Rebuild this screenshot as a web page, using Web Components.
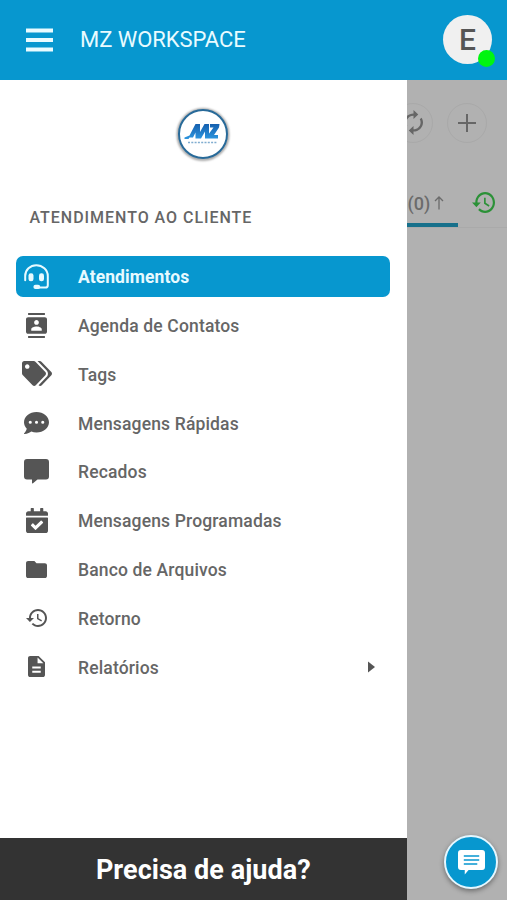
<!DOCTYPE html>
<html lang="pt-BR">
<head>
<meta charset="utf-8">
<title>MZ Workspace</title>
<style>
html,body{margin:0;height:100%;overflow:hidden}
body{font-family:Roboto,"Liberation Sans",sans-serif;background:#b1b1b1;color:#5c5c5c}
</style>
</head>
<body>
<mz-app></mz-app>
<script>
const ICONS = {
  headset: ['0 0 25 25', '<g fill="none" stroke="currentColor" stroke-width="2" stroke-linecap="round" stroke-linejoin="round"><path d="M1.2 16.2V12C1.2 5.8 6.2 1.2 12.3 1.2S23.8 5.8 23.8 12v9.2a2.4 2.4 0 0 1-2.4 2.4H12"/></g><rect x="4.5" y="9.2" width="5" height="8" rx="2.3"/><rect x="15" y="9.2" width="5" height="8" rx="2.3"/><rect x="9.4" y="20.8" width="6.8" height="4.2" rx="2.1"/>'],
  contacts: ['2 0 20 24', '<path d="M20 0H4v2h16V0zM4 24h16v-2H4v2zM20 4H4c-1.100 0-2 .9-2 2v12c0 1.100.9 2 2 2h16c1.100 0 2-.9 2-2V6c0-1.100-.9-2-2-2zm-8 2.750c1.240 0 2.250 1.010 2.250 2.250s-1.010 2.250-2.250 2.250S9.750 10.240 9.750 9 10.760 6.750 12 6.750zM17 17H7v-1.500c0-1.670 3.330-2.500 5-2.500s5 .83 5 2.500V17z"/>'],
  tags: ['0 0 640 512', '<path d="M497.941 225.941L286.059 14.059A48 48 0 0 0 252.118 0H48C21.490 0 0 21.490 0 48v204.118a48 48 0 0 0 14.059 33.941l211.882 211.882c18.744 18.745 49.136 18.746 67.882 0l204.118-204.118c18.745-18.745 18.745-49.137 0-67.882zM112 160c-26.510 0-48-21.490-48-48s21.490-48 48-48 48 21.490 48 48-21.490 48-48 48zm513.941 133.823L421.823 497.941c-18.745 18.745-49.137 18.745-67.882 0l-.36-.36L527.640 323.522c16.999-16.999 26.360-39.600 26.360-63.640s-9.362-46.641-26.360-63.640L331.397 0h48.721a48 48 0 0 1 33.941 14.059l211.882 211.882c18.745 18.745 18.745 49.137 0 67.882z"/>'],
  dots: ['0 32 512 448', '<path fill-rule="evenodd" d="M256 32C114.600 32 0 125.100 0 240c0 49.600 21.400 95 57 130.700C44.500 421.100 2.700 466 2.200 466.500c-2.200 2.300-2.800 5.700-1.500 8.700S4.800 480 8 480c66.300 0 116-31.800 140.600-51.400 32.700 12.300 69 19.400 107.400 19.400 141.400 0 256-93.100 256-208S397.400 32 256 32zM128 272a32 32 0 1 1 0-64 32 32 0 0 1 0 64zm128 0a32 32 0 1 1 0-64 32 32 0 0 1 0 64zm128 0a32 32 0 1 1 0-64 32 32 0 0 1 0 64z"/>'],
  note: ['0 0 25 25', '<path d="M3 0h19a3 3 0 0 1 3 3v14.500a3 3 0 0 1-3 3h-8.500L9 24.300q-1 .6-1-.6v-3.200H3a3 3 0 0 1-3-3V3a3 3 0 0 1 3-3z"/>'],
  calendar: ['0 0 448 512', '<path d="M436 160H12c-6.627 0-12-5.373-12-12v-36c0-26.510 21.490-48 48-48h48V12c0-6.627 5.373-12 12-12h40c6.627 0 12 5.373 12 12v52h128V12c0-6.627 5.373-12 12-12h40c6.627 0 12 5.373 12 12v52h48c26.510 0 48 21.490 48 48v36c0 6.627-5.373 12-12 12zM12 192h424c6.627 0 12 5.373 12 12v260c0 26.510-21.490 48-48 48H48c-26.510 0-48-21.490-48-48V204c0-6.627 5.373-12 12-12zm333.296 95.947l-28.169-28.398c-4.667-4.705-12.265-4.736-16.970-.068L194.120 364.665l-45.980-46.352c-4.667-4.705-12.266-4.736-16.971-.068l-28.397 28.170c-4.705 4.667-4.736 12.265-.068 16.970l82.601 83.269c4.667 4.705 12.265 4.736 16.970.068l142.953-141.805c4.705-4.667 4.736-12.265.068-16.970z"/>'],
  folder: ['2 4 20 16', '<path d="M10 4H4c-1.100 0-1.990.9-1.990 2L2 18c0 1.100.9 2 2 2h16c1.100 0 2-.9 2-2V8c0-1.100-.9-2-2-2h-8l-2-2z"/>'],
  history: ['1 3 21 18', '<path d="M13 3c-4.970 0-9 4.030-9 9H1l3.890 3.890.07.14L9 12H6c0-3.870 3.130-7 7-7s7 3.130 7 7-3.130 7-7 7c-1.930 0-3.680-.79-4.940-2.060l-1.420 1.420C8.270 19.990 10.510 21 13 21c4.970 0 9-4.030 9-9s-4.030-9-9-9zm-1 5v5l4.280 2.540.72-1.210-3.500-2.080V8H12z"/>'],
  report: ['4 2 16 20', '<path d="M14 2H6c-1.100 0-1.990.9-1.990 2L4 20c0 1.100.89 2 1.990 2H18c1.100 0 2-.9 2-2V8l-6-6zm2 16H8v-2h8v2zm0-4H8v-2h8v2zm-3-5V3.500L18.500 9H13z"/>'],
  menu: ['0 0 26 24', '<path d="M0 .5h26v4H0zM0 10h26v4H0zM0 19.500h26v4H0z"/>'],
  caret: ['0 0 7 12', '<path d="M0 .5v11L7 6z"/>'],
  sync: ['4 1 16 22', '<path d="M12 4V1L8 5l4 4V6c3.310 0 6 2.690 6 6 0 1.010-.25 1.970-.7 2.800l1.460 1.460C19.540 15.030 20 13.570 20 12c0-4.420-3.580-8-8-8zm0 14c-3.310 0-6-2.690-6-6 0-1.010.25-1.970.7-2.800L5.240 7.740C4.460 8.970 4 10.430 4 12c0 4.420 3.580 8 8 8v3l4-4-4-4v3z" transform="matrix(-1 0 0 1 24 0)"/>'],
  plus: ['0 0 18 18', '<path d="M8 0h2v8h8v2h-8v8H8v-8H0V8h8z"/>'],
  arrow: ['0 0 10 14', '<path d="M5 13.500V1M1 5l4-4 4 4" fill="none" stroke="currentColor" stroke-width="1.300"/>'],
  chat: ['0 0 28 25', '<path d="M3 0h22a3 3 0 0 1 3 3v14a3 3 0 0 1-3 3H11l-4 4.500V20H3a3 3 0 0 1-3-3V3a3 3 0 0 1 3-3z"/><path d="M6 6h16M6 10h16M6 14h14" stroke="#0797cf" stroke-width="1.600"/>'],
};
function define(name, html, setup){
  const t = document.createElement('template');
  t.innerHTML = html;
  customElements.define(name, class extends HTMLElement{
    connectedCallback(){
      if(this.shadowRoot) return;
      this.attachShadow({mode:'open'}).append(t.content.cloneNode(true));
      if(setup) setup(this, this.shadowRoot);
    }
  });
}
define('mz-icon', `<style>:host{display:block;flex:none}svg{display:block;fill:currentColor;overflow:visible}</style><svg preserveAspectRatio="none"></svg>`, (el, root) => {
  const [box, art] = ICONS[el.getAttribute('name')];
  const svg = root.querySelector('svg');
  svg.setAttribute('viewBox', box);
  svg.setAttribute('width', el.getAttribute('w'));
  svg.setAttribute('height', el.getAttribute('h'));
  svg.innerHTML = art;
});
define('mz-avatar', `<style>
:host{display:grid;place-items:center;position:relative;width:49px;height:49px;margin-top:-2px;border-radius:50%;background:#f0f0f0;color:#555;font:500 30px/49px Roboto,sans-serif}
i{position:absolute;right:-3px;bottom:-3px;width:17px;height:17px;border-radius:50%;background:#00f510}
</style><slot></slot><i></i>`);
define('mz-header', `<style>
:host{display:flex;align-items:center;height:80px;box-sizing:border-box;padding:0 15px 0 26px;background:#0797cf;color:#e9fbff}
h1{margin:0 auto 0 27px;font-weight:400;font-size:22px;line-height:30px;letter-spacing:-.05px}
</style><mz-icon name="menu" w="27" h="24"></mz-icon><h1><slot></slot></h1><mz-avatar>E</mz-avatar>`);
define('mz-logo', `<style>:host{display:block;height:54px}svg{display:block;margin:auto;overflow:visible}</style>
<svg width="54" height="54" viewBox="0 0 54 54">
<defs><filter id="s" x="-20%" y="-20%" width="140%" height="140%"><feGaussianBlur stdDeviation="1.300"/></filter>
<linearGradient id="g" x2="0" y2="1"><stop stop-color="#155fae"/><stop offset="1" stop-color="#2d96df"/></linearGradient></defs>
<circle cx="27" cy="27.500" r="25" fill="none" stroke="#999" stroke-width="2.500" filter="url(#s)"/>
<circle cx="27" cy="27" r="24" fill="#fff" stroke="#286a99" stroke-width="2"/>
<path fill="url(#g)" d="M8.500 30.500l5-2 6-11.500h4.500v8l4.500-8h4.500v14.500h-4v-7l-4 7h-5.500v-6l-2.500 5h-3.500l-1 1.500h-4zM34 17h9.500l-.5 3.500-5 7.500h4v3.500H31.500l.5-3.500 5.500-7.500H34z"/>
<path d="M12 35.500h29" stroke="#80add0" stroke-width="1.500" stroke-dasharray="2 1.300"/>
</svg>`);
define('mz-item', `<style>
:host{display:flex;align-items:center;height:40.8px;border-radius:7px;padding-right:15px;color:#555}
:host([active]){background:#0797cf;color:#e7faff}
.ico{width:42px;display:grid;place-items:center;flex:none;margin-right:20.500px}
.label{flex:1;font-weight:500;font-size:17.500px;line-height:24px;margin-top:1.500px;letter-spacing:.15px;color:#666;white-space:nowrap}
:host([active]) .label{color:#e7faff;font-weight:700;letter-spacing:.08px}
</style><span class="ico"></span><span class="label"><slot></slot></span><slot name="end"></slot>`, (el, root) => {
  const i = document.createElement('mz-icon');
  for (const a of ['w','h']) i.setAttribute(a, el.getAttribute(a));
  i.setAttribute('name', el.getAttribute('icon'));
  root.querySelector('.ico').append(i);
});
define('mz-drawer', `<style>
:host{display:flex;flex-direction:column;width:406.500px;flex:none;background:#fff}
mz-logo{margin-top:27px}
h2{margin:46px 0 27px 29.500px;font-weight:500;font-size:16px;line-height:22px;letter-spacing:.970px;color:#666;white-space:nowrap}
nav{display:grid;gap:8px;padding:0 16.500px 0 15.500px}
footer{margin-top:auto;height:62.500px;background:#333;color:#fff;font-weight:700;font-size:27px;letter-spacing:.04px;line-height:64px;text-align:center}
</style>
<mz-logo></mz-logo><h2>ATENDIMENTO AO CLIENTE</h2>
<nav>
<mz-item active icon="headset" w="25" h="25">Atendimentos</mz-item>
<mz-item icon="contacts" w="21" h="25">Agenda de Contatos</mz-item>
<mz-item icon="tags" w="30" h="25">Tags</mz-item>
<mz-item icon="dots" w="25" h="22">Mensagens Rápidas</mz-item>
<mz-item icon="note" w="25" h="25">Recados</mz-item>
<mz-item icon="calendar" w="22" h="25">Mensagens Programadas</mz-item>
<mz-item icon="folder" w="21" h="17">Banco de Arquivos</mz-item>
<mz-item icon="history" w="21" h="18">Retorno</mz-item>
<mz-item icon="report" w="17" h="21">Relatórios<mz-icon slot="end" name="caret" w="7" h="12"></mz-icon></mz-item>
</nav>
<footer>Precisa de ajuda?</footer>`);
define('mz-backdrop', `<style>
:host{display:flex;flex-direction:column;flex:1;min-width:0;overflow:hidden;background:#b1b1b1;color:#666}
.tools{display:flex;gap:14px;margin:22.500px 0 0 -13.500px}
.tools span{display:grid;place-items:center;width:38px;height:38px;border:1px solid #a9a9a9;border-radius:50%}
.tabs{display:flex;height:64px;margin-top:20.500px;border-bottom:1px solid #aaa}
.tab{display:flex;align-items:center;width:51.500px;box-sizing:border-box;border-bottom:4px solid #17708b;font-weight:500;font-size:18px;gap:4px;padding:20px 0 0 1px;color:#6b6b6b}
.hist{color:#2b9137;padding:29px 0 0 14px}
.chat{margin:auto 9px 11px auto;width:50px;height:50px;border:2px solid #e4f7ff;border-radius:50%;background:#0797cf;color:#fff;display:grid;place-items:center;box-shadow:0 2px 5px #0006}
</style>
<div class="tools"><span><mz-icon name="sync" w="19" h="25"></mz-icon></span><span><mz-icon name="plus" w="18" h="18"></mz-icon></span></div>
<div class="tabs"><div class="tab">(0)<mz-icon name="arrow" w="10" h="14"></mz-icon></div><div class="hist"><mz-icon name="history" w="23" h="21"></mz-icon></div></div>
<div class="chat"><mz-icon name="chat" w="27" h="25"></mz-icon></div>`);
define('mz-app', `<style>:host{display:flex;flex-direction:column;height:900px}main{display:flex;flex:1;min-height:0}</style>
<mz-header>MZ WORKSPACE</mz-header><main><mz-drawer></mz-drawer><mz-backdrop></mz-backdrop></main>`);
</script>
</body>
</html>
